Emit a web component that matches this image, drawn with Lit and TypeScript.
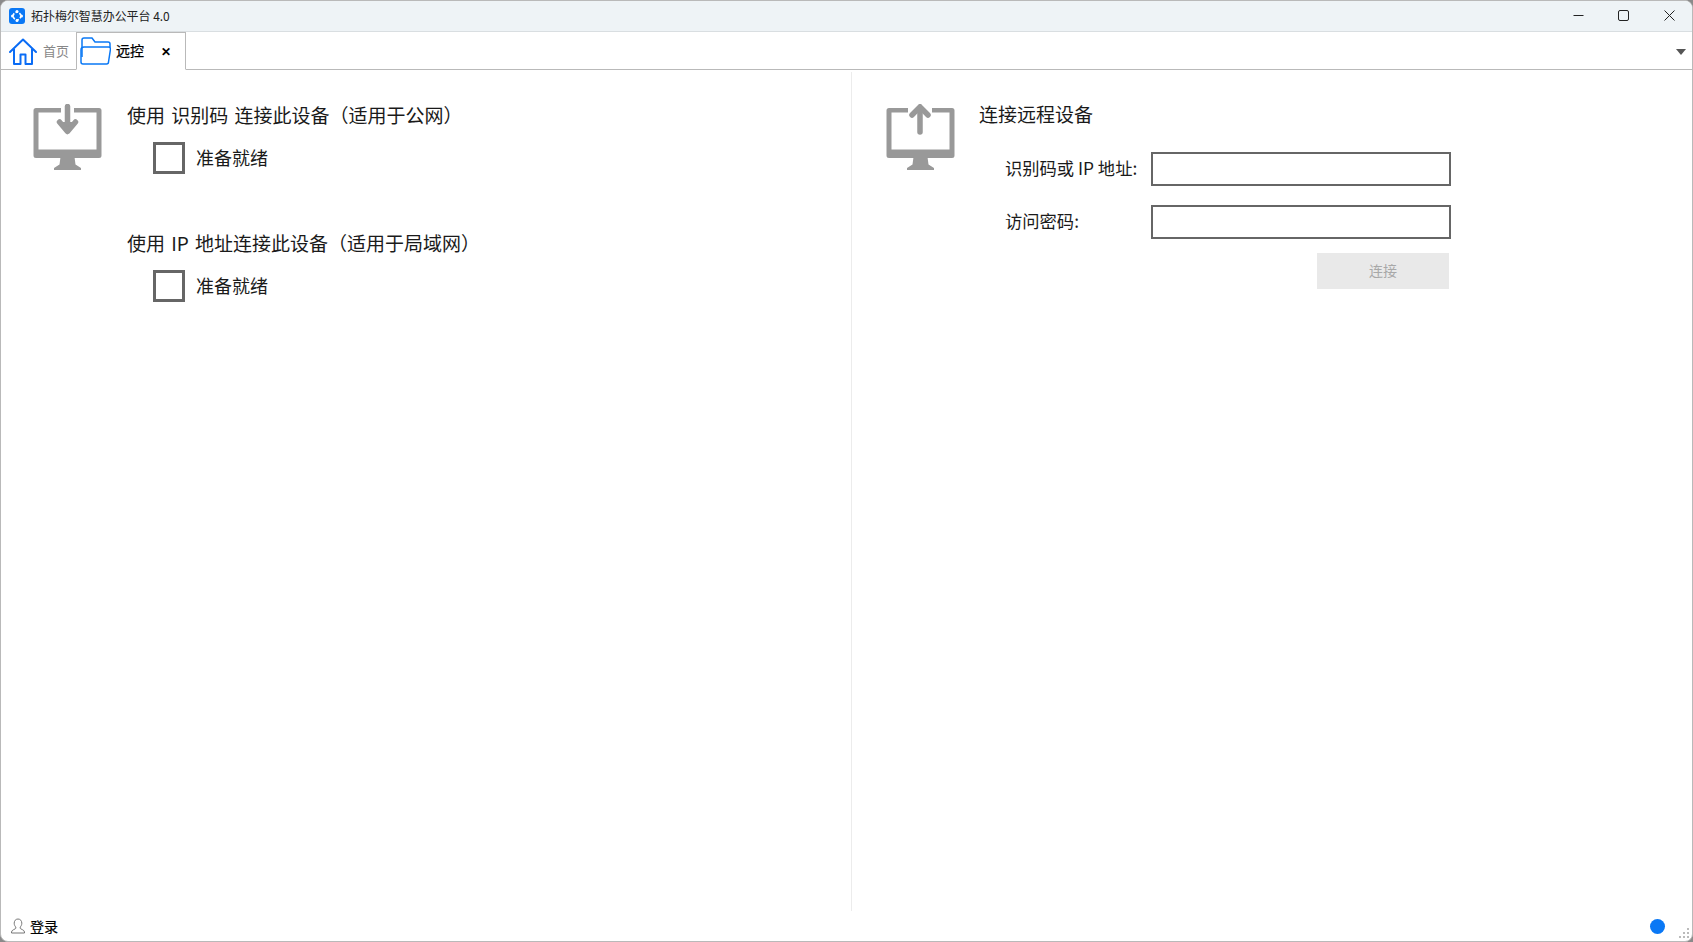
import { LitElement, html, css, svg } from "lit";
import { customElement } from "lit/decorators.js";

const monitor = (arrow: unknown, d: string) => html`<svg class="monitor" viewBox="0 0 70 68" width="70" height="68">
  <path d="${d}" fill="#999" fill-rule="evenodd"/>
  <path d="M27.500 53h14l1 7.500 5.500 3.500v2H21v-2l5.500-3.500z" fill="#999"/>
  ${arrow}
</svg>`;

const downFrame = "M3 4H28v4.500H5.500v37h58v-37H41V4h25A2.500 2.500 0 0 1 68.500 6.500v45A2.500 2.500 0 0 1 66 54H3A2.500 2.500 0 0 1 .5 51.500v-45A2.500 2.500 0 0 1 3 4z";
const upFrame = "M3 4H22v4.500H5.500v37h58v-37H46V4h20A2.500 2.500 0 0 1 68.500 6.500v45A2.500 2.500 0 0 1 66 54H3A2.500 2.500 0 0 1 .5 51.500v-45A2.500 2.500 0 0 1 3 4z";

const downArrow = svg`<path d="M34.500 2.500V24" stroke="#999" stroke-width="5.500" stroke-linecap="round" fill="none"/><path d="M26.500 18 34.500 27.500 42.500 18" stroke="#999" stroke-width="5.500" stroke-linecap="round" stroke-linejoin="round" fill="#999"/>`;
const upArrow = svg`<path d="M34 8v20" stroke="#999" stroke-width="5.500" stroke-linecap="round" fill="none"/><path d="M26 11 34 2.800 42 11" stroke="#999" stroke-width="5.500" stroke-linecap="round" stroke-linejoin="round" fill="none"/>`;

@customElement("app-root")
export class AppRoot extends LitElement {
  static styles = css`
    :host {
      display: block;
      width: 1693px;
      height: 942px;
      font-family: "Noto Sans CJK SC", "Liberation Sans", sans-serif;
      color: #111;
      background: #8a8a8a;
    }
    * { box-sizing: border-box; }
    .window {
      width: 100%;
      height: 100%;
      display: flex;
      flex-direction: column;
      background: #fff;
      border: 1px solid #b9b9b9;
      border-radius: 8px;
      overflow: hidden;
    }
    .titlebar {
      height: 31px;
      flex: none;
      display: flex;
      align-items: center;
      background: #eef3f6;
      border-bottom: 1px solid #d9dee1;
      padding-left: 8px;
    }
    .app-icon { flex: none; margin-right: 6px; margin-top: -1px; }
    .title { font-size: 12px; color: #222; flex: 1; margin-top: -2px; letter-spacing: -0.05px; }
    .controls { display: flex; align-items: center; height: 100%; }
    .ctl { width: 45.500px; height: 100%; display: flex; align-items: center; justify-content: center; margin-top: -1px; }
    .tabbar {
      height: 38px;
      flex: none;
      display: flex;
      align-items: flex-end;
      background: #fff;
      border-bottom: 1px solid #b9b9b9;
    }
    .tab { height: 38px; display: flex; align-items: center; margin-bottom: -1px; }
    .tab.home { width: 75px; padding-left: 8px; gap: 6px; font-size: 13px; color: #888; }
    .tab.home span { margin-top: -2px; }
    .tab.active {
      width: 110px;
      padding-left: 3px;
      background: #fff;
      border: 1px solid #b9b9b9;
      border-bottom: 1px solid #fff;
      font-size: 14px;
      color: #000;
    }
    .tab.active .name { margin-left: 5px; width: 44px; margin-top: -2px; -webkit-text-stroke: 0.25px #000; }
    .close { font-size: 12px; font-weight: 700; font-family: "Liberation Sans", sans-serif; margin-left: 1px; margin-top: 1px; }
    .spacer { flex: 1; }
    .menu-arrow { width: 0; height: 0; border: 5px solid transparent; border-top: 6px solid #555; border-bottom: 0; margin: 0 6px 14px 0; }
    .body { flex: 1; display: flex; min-height: 0; padding-top: 2px; }
    .pane { width: 851px; flex: none; padding: 32px 0 0 32px; display: flex; gap: 24px; border-right: 1px solid #ececec; }
    .pane.right { flex: 1; border-right: 0; padding-left: 34px; gap: 23px; }
    .monitor { flex: none; display: block; }
    .col { display: flex; flex-direction: column; }
    h2 { margin: 0; font-size: 19px; font-weight: 400; line-height: 28px; color: #1a1a1a; white-space: pre; height: 28px; margin-top: -3px; word-spacing: 2px; }
    .pane.right h2 { margin-top: -4px; margin-bottom: 1px; }
    .check-row { display: flex; align-items: center; gap: 11px; margin: 13px 0 0 26px; font-size: 18px; line-height: 32px; color: #1a1a1a; }
    .check-row span:last-child { margin-top: -2px; }
    .box { width: 32px; height: 32px; border: 3px solid #666; background: #fff; flex: none; }
    .section + .section { margin-top: 58px; }
    .form { display: grid; grid-template-columns: 146px 300px; row-gap: 19px; margin: 23px 0 0 26px; align-items: center; font-size: 17.300px; color: #1a1a1a; }
    .form span { padding-bottom: 4px; }
    .input { height: 34px; border: 2px solid #666; background: #fff; }
    .btn-row { grid-column: 2; display: flex; justify-content: flex-end; margin-top: -5px; padding-right: 2px; }
    .btn { width: 132px; height: 36px; padding-bottom: 2px; background: #e9e9e9; color: #a8a8a8; font-size: 14px; display: flex; align-items: center; justify-content: center; }
    .status { height: 30px; flex: none; display: flex; align-items: center; padding: 0 0 0 9px; font-size: 14px; color: #000; position: relative; }
    .status .login { margin-left: 4px; -webkit-text-stroke: 0.2px #000; }
    .dot { width: 15px; height: 15px; background: #0a78f5; border-radius: 50%; margin: 0 27px 0 auto; }
    .grip { position: absolute; right: 1px; bottom: 1px; }
  `;

  render() {
    return html`<div class="window">
      <div class="titlebar">
        <svg class="app-icon" width="16" height="16" viewBox="0 0 16 16">
          <rect width="16" height="16" rx="3" fill="#0a78f5"/>
          <circle cx="8" cy="8" r="3.800" fill="none" stroke="#fff" stroke-width="1.600" stroke-dasharray="2.500 1.500"/>
          <circle cx="8" cy="3.500" r="1.500" fill="#fff"/><circle cx="8" cy="12.500" r="1.500" fill="#fff"/>
          <circle cx="3.500" cy="8" r="1.500" fill="#fff"/><circle cx="12.500" cy="8" r="1.500" fill="#fff"/>
        </svg>
        <span class="title">拓扑梅尔智慧办公平台 4.0</span>
        <div class="controls">
          <div class="ctl"><svg width="11" height="11" viewBox="0 0 11 11"><path d="M0.500 5.500h10" stroke="#222" fill="none"/></svg></div>
          <div class="ctl"><svg width="11" height="11" viewBox="0 0 11 11"><rect x="0.500" y="0.500" width="10" height="10" rx="1.500" stroke="#222" fill="none"/></svg></div>
          <div class="ctl"><svg width="11" height="11" viewBox="0 0 11 11"><path d="M0.500 0.500l10 10M10.500 0.500l-10 10" stroke="#222" fill="none"/></svg></div>
        </div>
      </div>
      <div class="tabbar">
        <div class="tab home">
          <svg width="28" height="27" viewBox="0 0 28 27">
            <path d="M1 14 14 1.500 27 14" stroke="#0a6cf5" stroke-width="2" fill="none" stroke-linecap="round" stroke-linejoin="round"/>
            <path d="M5 11v15h6.500v-9.500h5V26H23V11" stroke="#0a6cf5" stroke-width="2" fill="none" stroke-linejoin="round"/>
          </svg>
          <span>首页</span>
        </div>
        <div class="tab active">
          <svg width="31" height="28" viewBox="0 0 31 28">
            <path d="M2 20V3a2 2 0 0 1 2-2h8l3 4h13a2 2 0 0 1 2 2v3" stroke="#0a78f5" stroke-width="1.500" fill="none"/>
            <path d="M4 10h24.500a2 2 0 0 1 2 2l-2 13a2 2 0 0 1-2 2H3a2 2 0 0 1-2-2V13a3 3 0 0 1 3-3z" stroke="#0a78f5" stroke-width="1.500" fill="none"/>
          </svg>
          <span class="name">远控</span>
          <span class="close">✕</span>
        </div>
        <div class="spacer"></div>
        <div class="menu-arrow"></div>
      </div>
      <div class="body">
        <div class="pane">
          ${monitor(downArrow, downFrame)}
          <div class="col">
            <div class="section">
              <h2>使用 识别码 连接此设备（适用于公网）</h2>
              <div class="check-row"><span class="box"></span><span>准备就绪</span></div>
            </div>
            <div class="section">
              <h2>使用 IP 地址连接此设备（适用于局域网）</h2>
              <div class="check-row"><span class="box"></span><span>准备就绪</span></div>
            </div>
          </div>
        </div>
        <div class="pane right">
          ${monitor(upArrow, upFrame)}
          <div class="col">
            <h2>连接远程设备</h2>
            <div class="form">
              <span>识别码或 IP 地址:</span><div class="input"></div>
              <span>访问密码:</span><div class="input"></div>
              <div class="btn-row"><div class="btn">连接</div></div>
            </div>
          </div>
        </div>
      </div>
      <div class="status">
        <svg width="16" height="16" viewBox="0 0 16 16">
          <path d="M8 1c-2.500 0-3.800 2-3.800 4.200 0 1.800.8 3 1.600 3.800v1.300c0 .7-4.300 1.600-4.300 3.700V15h13v-1c0-2.100-4.300-3-4.300-3.700V9c.8-.8 1.600-2 1.600-3.800C11.800 3 10.500 1 8 1z" stroke="#777" fill="none"/>
        </svg>
        <span class="login">登录</span>
        <div class="dot"></div>
        <svg class="grip" width="12" height="12" viewBox="0 0 12 12" fill="#bbb">
          <rect x="8" y="0" width="2" height="2"/><rect x="4" y="4" width="2" height="2"/><rect x="8" y="4" width="2" height="2"/>
          <rect x="0" y="8" width="2" height="2"/><rect x="4" y="8" width="2" height="2"/><rect x="8" y="8" width="2" height="2"/>
        </svg>
      </div>
    </div>`;
  }
}
